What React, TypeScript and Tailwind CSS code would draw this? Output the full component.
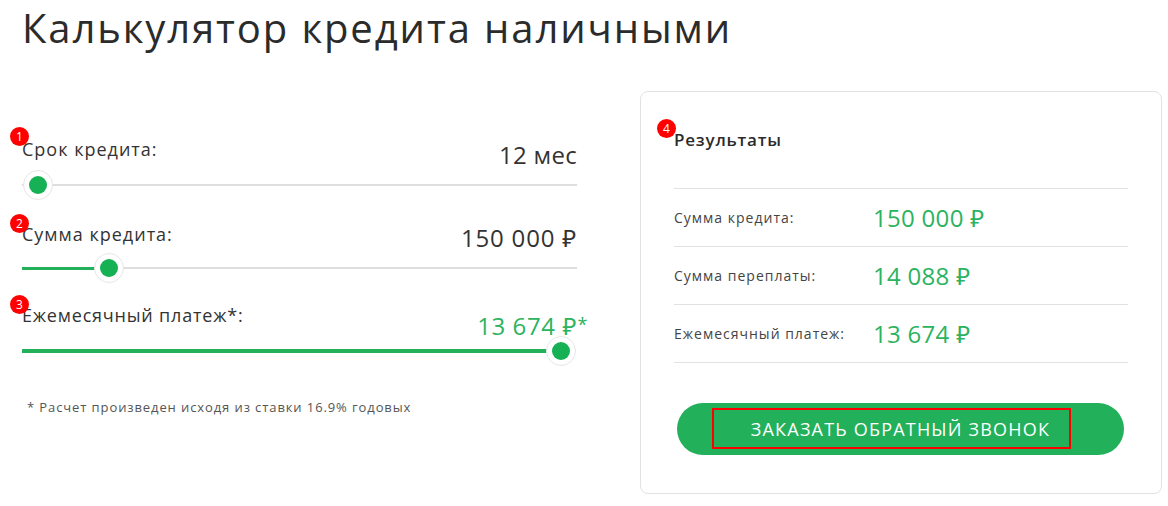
import React from "react";

const Badge = ({ n, className }: { n: string; className: string }) => (
  <div
    className={
      "absolute w-[19px] h-[19px] rounded-full bg-[#ff0000] text-white text-[12px] leading-[19px] text-center " +
      className
    }
    style={{ fontFamily: "'Open Sans', sans-serif" }}
  >
    {n}
  </div>
);

const Thumb = ({ left }: { left: number }) => (
  <div
    className="absolute top-1/2 -translate-y-1/2 -translate-x-1/2 w-[30px] h-[30px] rounded-full bg-white border border-[#e6e6e6] flex items-center justify-center"
    style={{ left }}
  >
    <div className="w-[18px] h-[18px] rounded-full bg-[#16b155]" />
  </div>
);

export default function App() {
  return (
    <div
      className="w-[1168px] h-[506px] bg-white text-[#333] overflow-hidden relative"
      style={{ fontFamily: "'Open Sans', 'Noto Sans', sans-serif" }}
    >
      <h1 className="pl-[22px] text-[40px] leading-[55px] text-[#2b2b2b] tracking-[1.9px] whitespace-nowrap">
        Калькулятор кредита наличными
      </h1>
      <div className="flex mt-[36px]">
        {/* left column */}
        <div className="w-[555px] ml-[22px] mt-[42px]">
          {/* block 1 */}
          <div className="relative">
            <Badge n="1" className="-left-[12px] -top-[6px]" />
            <div className="flex justify-between items-end h-[37px]">
              <span className="text-[18px] leading-[22px] mb-[10px] tracking-[1px]">Срок кредита:</span>
              <span className="text-[24px] leading-[28px] mb-[1px] tracking-[0.3px]">12 мес</span>
            </div>
            <div className="relative h-[30px] flex items-center">
              <div className="w-full h-[2px] bg-[#dedede]" />
              <Thumb left={16} />
            </div>
          </div>
          {/* block 2 */}
          <div className="relative mt-[14px]">
            <Badge n="2" className="-left-[12px] -top-[0px]" />
            <div className="flex justify-between items-end h-[39px]">
              <span className="text-[18px] leading-[22px] mb-[8px] tracking-[1px]">Сумма кредита:</span>
              <span className="text-[24px] leading-[28px] mb-[1px] tracking-[0.8px]">150 000 ₽</span>
            </div>
            <div className="relative h-[30px] flex items-center">
              <div className="w-[87px] h-[3px] bg-[#22b05a]" />
              <div className="flex-1 h-[2px] bg-[#dedede]" />
              <Thumb left={87} />
            </div>
          </div>
          {/* block 3 */}
          <div className="relative mt-[14px]">
            <Badge n="3" className="-left-[12px] -top-[2px]" />
            <div className="flex justify-between items-end h-[39px]">
              <span className="text-[18px] leading-[22px] mb-[10px] tracking-[0.8px]">Ежемесячный платеж*:</span>
              <span className="relative text-[24px] leading-[28px] -mb-[4px] text-[#2bb35f] tracking-[0.6px]">
                13 674 ₽
                <span className="absolute -right-[11px] top-[-2px] text-[18px]">*</span>
              </span>
            </div>
            <div className="relative h-[30px] flex items-center">
              <div className="w-[539px] h-[4px] bg-[#22b05a]" />
              <Thumb left={539} />
            </div>
          </div>
          <p className="mt-[32px] ml-[5px] text-[13px] leading-[18px] text-[#555] tracking-[0.9px]">
            * Расчет произведен исходя из ставки 16.9% годовых
          </p>
        </div>
        {/* right panel */}
        <div className="ml-[63px] w-[522px] h-[403px] border border-[#e2e2e2] rounded-[8px] px-[33px] pt-[35px] relative">
          <Badge n="4" className="left-[16px] top-[27px]" />
          <h2 className="text-[17px] leading-[24px] font-semibold text-[#2b2b2b] pt-[1px] tracking-[0.8px]">Результаты</h2>
          <div className="mt-[36px] w-[454px] border-t border-[#e2e2e2]">
            {[
              ["Сумма кредита:", "150 000 ₽"],
              ["Сумма переплаты:", "14 088 ₽"],
              ["Ежемесячный платеж:", "13 674 ₽"],
            ].map(([l, v]) => (
              <div key={l} className="flex items-center h-[58px] border-b border-[#e2e2e2]">
                <span className="w-[199px] text-[14px] text-[#444] tracking-[1px]">{l}</span>
                <span className="text-[24px] text-[#2bb35f] tracking-[0.3px]">{v}</span>
              </div>
            ))}
          </div>
          <div className="mt-[40px] ml-[3px] w-[447px] h-[52px] rounded-full bg-[#22b05a] flex items-center justify-center relative">
            <div className="absolute left-[35px] top-[5px] w-[359px] h-[41px] border-2 border-[#ff0000]" />
            <span className="text-white text-[18px] leading-[20px] tracking-[1.2px]">ЗАКАЗАТЬ ОБРАТНЫЙ ЗВОНОК</span>
          </div>
        </div>
      </div>
    </div>
  );
}
